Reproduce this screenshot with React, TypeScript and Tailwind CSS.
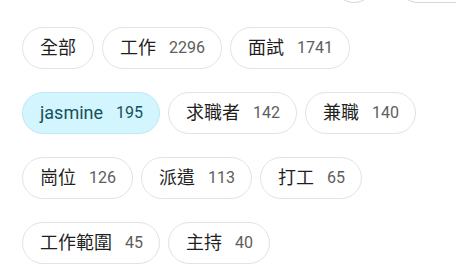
const rows: { label: string; count?: number; active?: boolean }[][] = [
  [{ label: "全部" }, { label: "工作", count: 2296 }, { label: "面試", count: 1741 }],
  [
    { label: "jasmine", count: 195, active: true },
    { label: "求職者", count: 142 },
    { label: "兼職", count: 140 },
  ],
  [
    { label: "崗位", count: 126 },
    { label: "派遣", count: 113 },
    { label: "打工", count: 65 },
  ],
  [
    { label: "工作範圍", count: 45 },
    { label: "主持", count: 40 },
  ],
];

function Chip({ label, count, active }: { label: string; count?: number; active?: boolean }) {
  return (
    <button
      className={
        "h-[42px] rounded-full border pl-[17px] flex items-center gap-[13px] " +
        (count !== undefined ? "pr-[16px] " : "pr-[17px] ") +
        (active
          ? "bg-[#d3f5fd] border-[#bfe9f6] text-[#16505e]"
          : "bg-white border-[#e3e3e3] text-[#1f1f1f]")
      }
    >
      <span className="text-[18px] leading-none">{label}</span>
      {count !== undefined && (
        <span className={"text-[16px] leading-none " + (active ? "text-[#16505e]" : "text-[#5e5e5e]")}>
          {count}
        </span>
      )}
    </button>
  );
}

export default function App() {
  return (
    <div
      className="w-[456px] h-[270px] bg-white overflow-hidden"
      style={{ fontFamily: 'Roboto, "Noto Sans CJK TC", sans-serif' }}
    >
      <div className="h-[3px] overflow-hidden flex items-end">
        <div className="ml-[334px] w-[40px] h-[40px] shrink-0 rounded-full border border-[#d6d6d6]" />
        <div className="ml-[24px] w-[120px] h-[40px] shrink-0 rounded-full border border-[#d6d6d6]" />
      </div>
      <div className="pl-[22px] pt-[24px] flex flex-col gap-[23px]">
        {rows.map((row, i) => (
          <div key={i} className="flex gap-[8px]">
            {row.map((c) => (
              <Chip key={c.label} {...c} />
            ))}
          </div>
        ))}
      </div>
    </div>
  );
}
